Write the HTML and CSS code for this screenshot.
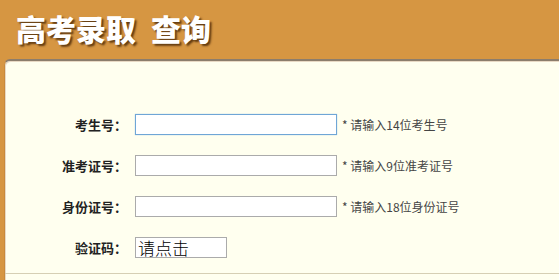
FILE: index.html
```html
<!DOCTYPE html>
<html lang="zh-CN">
<head>
    <meta charset="UTF-8">
    <title>高考录取查询</title>
    <link rel="stylesheet" href="styles.css">
</head>
<body>
    <div class="header">
        <h1>高考录取<span class="gap"></span>查询</h1>
    </div>

    <div class="panel">
        <div class="form">
            <div class="row">
                <label for="ksh">考生号：</label>
                <input type="text" id="ksh" class="text-input focused">
                <span class="hint">* 请输入14位考生号</span>
            </div>
            <div class="row">
                <label for="zkzh">准考证号：</label>
                <input type="text" id="zkzh" class="text-input">
                <span class="hint">* 请输入9位准考证号</span>
            </div>
            <div class="row">
                <label for="sfzh">身份证号：</label>
                <input type="text" id="sfzh" class="text-input">
                <span class="hint">* 请输入18位身份证号</span>
            </div>
            <div class="row">
                <label>验证码：</label>
                <div class="captcha">请点击</div>
            </div>
        </div>
        <div class="divider"></div>
    </div>
</body>
</html>
```

FILE: styles.css
```css
body {
    margin: 0;
    background-color: #d69642;
    font-family: "Noto Sans CJK SC", "Liberation Sans", sans-serif;
    overflow: hidden;
}
.header {
    height: 59px;
    box-sizing: border-box;
    padding: 9px 0 0 16px;
}
h1 {
    margin: 0;
    font-size: 30px;
    line-height: 38px;
    font-weight: 900;
    color: #fff;
    text-shadow: 2px 2px 2px rgba(60, 30, 0, 0.75);
}
.gap {
    display: inline-block;
    width: 15px;
}
.panel {
    margin-left: 4px;
    height: 221px;
    background-color: #ffffef;
    border-top: 2px solid #8c7d6c;
    border-left: 1px solid #c98a3c;
    border-top-left-radius: 6px;
    box-shadow: inset 1px 1px 0 #e8d9c4;
    padding-top: 43px;
    box-sizing: border-box;
}
.row {
    display: flex;
    align-items: center;
    height: 41px;
}
label {
    width: 122px;
    text-align: right;
    font-size: 13px;
    font-weight: bold;
    color: #222;
    margin-right: 8px;
}
.text-input {
    width: 202px;
    height: 21px;
    box-sizing: border-box;
    border: 1px solid #ababab;
    background: #fff;
    padding: 0;
    margin: 0;
}
.text-input.focused {
    border-color: #6fa6d6;
    box-shadow: 0 0 1px #9cc4e6;
}
.hint {
    margin-left: 5px;
    font-size: 12px;
    color: #444;
}
.captcha {
    width: 92px;
    height: 21px;
    box-sizing: border-box;
    border: 1px solid #ababab;
    background: #fff;
    font-size: 17px;
    font-weight: 300;
    line-height: 19px;
    padding-left: 2px;
    color: #000;
}
.divider {
    margin-top: 5px;
    border-top: 1px solid #d6cfb4;
}
```
